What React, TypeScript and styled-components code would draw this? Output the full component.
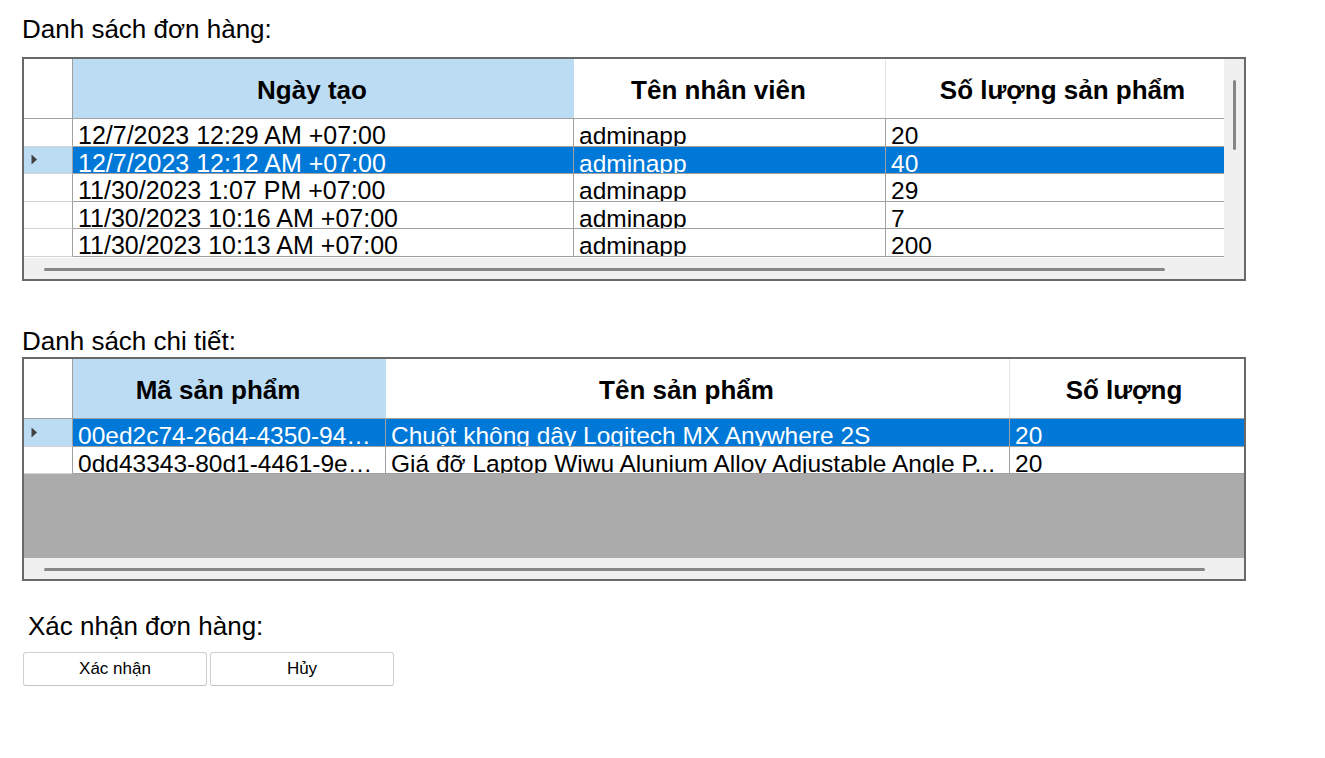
import React from 'react';
import styled, { createGlobalStyle } from 'styled-components';

const GlobalStyle = createGlobalStyle`
  html, body { margin: 0; padding: 0; background: #ffffff; }
  body { font-family: "Liberation Sans", Arial, sans-serif; color: #000; }
  * { box-sizing: border-box; }
`;

const Page = styled.div`
  display: flex;
  flex-direction: column;
  align-items: flex-start;
  width: 1325px;
  height: 758px;
  padding: 14px 0 0 22px;
  overflow: hidden;
`;

const Label = styled.div<{ $top?: number; $indent?: number }>`
  font-size: 26px;
  line-height: 30px;
  height: 30px;
  white-space: nowrap;
  margin-top: ${(p) => p.$top ?? 0}px;
  padding-left: ${(p) => p.$indent ?? 0}px;
`;

const GridFrame = styled.div<{ $top: number }>`
  margin-top: ${(p) => p.$top}px;
  width: 1224px;
  height: 224px;
  border: 2px solid #696969;
  display: flex;
  flex-direction: column;
  background: #ffffff;
`;

const GridBody = styled.div`
  display: flex;
  height: 199px;
`;

const TableArea = styled.div`
  flex: 1;
  min-width: 0;
  overflow: hidden;
  display: flex;
  flex-direction: column;
  background: #ababab;
`;

const HeaderRow = styled.div<{ $cols: string }>`
  display: grid;
  grid-template-columns: ${(p) => p.$cols};
  height: 60px;
  flex: none;
  border-bottom: 1px solid #a0a0a0;
  background: #ffffff;
`;

const CornerCell = styled.div`
  background: #ffffff;
  border-right: 1px solid #a0a0a0;
`;

const HeaderCell = styled.div<{ $active?: boolean }>`
  display: flex;
  align-items: center;
  justify-content: center;
  padding: 3px 22px 0 0;
  font-size: 26px;
  font-weight: bold;
  white-space: nowrap;
  overflow: hidden;
  background: ${(p) => (p.$active ? '#bcdcf4' : '#ffffff')};
  border-right: 1px solid ${(p) => (p.$active ? '#bcdcf4' : '#e4e4e4')};
`;

const RowsArea = styled.div<{ $fill?: boolean }>`
  display: flex;
  flex-direction: column;
  flex: ${(p) => (p.$fill ? '1' : 'none')};
  background: ${(p) => (p.$fill ? '#ffffff' : 'transparent')};
`;

const Row = styled.div<{ $cols: string }>`
  display: grid;
  grid-template-columns: ${(p) => p.$cols};
  height: 27.5px;
  flex: none;
`;

const RowHeaderCell = styled.div<{ $selected?: boolean }>`
  display: flex;
  align-items: center;
  padding-left: 7px;
  background: ${(p) => (p.$selected ? '#bcdcf4' : '#ffffff')};
  border-right: 1px solid #a0a0a0;
  border-bottom: 1px solid #d4d4d4;
`;

const Cell = styled.div<{ $selected?: boolean; $size?: number }>`
  padding: 3px 0 0 5px;
  font-size: ${(p) => p.$size ?? 24.5}px;
  line-height: 27.5px;
  white-space: nowrap;
  overflow: hidden;
  background: ${(p) => (p.$selected ? '#0078d7' : '#ffffff')};
  color: ${(p) => (p.$selected ? '#ffffff' : '#000000')};
  border-right: 1px solid #a0a0a0;
  border-bottom: 1px solid #a0a0a0;
`;

const VScroll = styled.div`
  width: 20px;
  flex: none;
  background: #f0f0f0;
  padding: 21px 0 0 9px;
`;

const VThumb = styled.div`
  width: 3px;
  height: 70px;
  border-radius: 2px;
  background: #868686;
`;

const HScroll = styled.div`
  height: 21px;
  flex: none;
  background: #f0f0f0;
  padding: 10px 0 0 20px;
`;

const HThumb = styled.div<{ $w: number }>`
  width: ${(p) => p.$w}px;
  height: 3px;
  border-radius: 2px;
  background: #868686;
`;

const Buttons = styled.div`
  display: flex;
  gap: 3px;
  margin-top: 11px;
  padding-left: 1px;
`;

const Button = styled.button`
  width: 184px;
  height: 34px;
  background: #ffffff;
  border: 1px solid #d0d0d0;
  border-bottom-color: #c2c2c2;
  border-radius: 3px;
  font-family: "Liberation Sans", Arial, sans-serif;
  font-size: 17px;
  color: #000;
  padding: 0;
`;

const Caret = () => (
  <svg width="7" height="11" viewBox="0 0 7 11">
    <path d="M0.5 0.5 L6 5.5 L0.5 10.5 Z" fill="#404040" />
  </svg>
);

const ordersCols = '49px 501px 312px 376px';
const orders = [
  ['12/7/2023 12:29 AM +07:00', 'adminapp', '20'],
  ['12/7/2023 12:12 AM +07:00', 'adminapp', '40'],
  ['11/30/2023 1:07 PM +07:00', 'adminapp', '29'],
  ['11/30/2023 10:16 AM +07:00', 'adminapp', '7'],
  ['11/30/2023 10:13 AM +07:00', 'adminapp', '200'],
];

const detailCols = '49px 313px 624px 251px';
const details = [
  ['00ed2c74-26d4-4350-94…', 'Chuột không dây Logitech MX Anywhere 2S', '20'],
  ['0dd43343-80d1-4461-9e…', 'Giá đỡ Laptop Wiwu Alunium Alloy Adjustable Angle P...', '20'],
];

export default function App() {
  return (
    <>
      <GlobalStyle />
      <Page>
        <Label>Danh sách đơn hàng:</Label>
        <GridFrame $top={13}>
          <GridBody>
            <TableArea>
              <HeaderRow $cols={ordersCols}>
                <CornerCell />
                <HeaderCell $active>Ngày tạo</HeaderCell>
                <HeaderCell>Tên nhân viên</HeaderCell>
                <HeaderCell>Số lượng sản phẩm</HeaderCell>
              </HeaderRow>
              <RowsArea $fill>
                {orders.map((r, i) => (
                  <Row key={i} $cols={ordersCols}>
                    <RowHeaderCell $selected={i === 1}>{i === 1 && <Caret />}</RowHeaderCell>
                    {r.map((c, j) => (
                      <Cell key={j} $selected={i === 1} $size={j === 0 ? 25 : 24.5}>
                        {c}
                      </Cell>
                    ))}
                  </Row>
                ))}
              </RowsArea>
            </TableArea>
            <VScroll>
              <VThumb />
            </VScroll>
          </GridBody>
          <HScroll>
            <HThumb $w={1121} />
          </HScroll>
        </GridFrame>

        <Label $top={45}>Danh sách chi tiết:</Label>
        <GridFrame $top={1}>
          <GridBody>
            <TableArea>
              <HeaderRow $cols={detailCols}>
                <CornerCell />
                <HeaderCell $active>Mã sản phẩm</HeaderCell>
                <HeaderCell>Tên sản phẩm</HeaderCell>
                <HeaderCell>Số lượng</HeaderCell>
              </HeaderRow>
              <RowsArea>
                {details.map((r, i) => (
                  <Row key={i} $cols={detailCols}>
                    <RowHeaderCell $selected={i === 0}>{i === 0 && <Caret />}</RowHeaderCell>
                    {r.map((c, j) => (
                      <Cell key={j} $selected={i === 0}>
                        {c}
                      </Cell>
                    ))}
                  </Row>
                ))}
              </RowsArea>
            </TableArea>
          </GridBody>
          <HScroll>
            <HThumb $w={1161} />
          </HScroll>
        </GridFrame>

        <Label $top={30} $indent={6}>Xác nhận đơn hàng:</Label>
        <Buttons>
          <Button>Xác nhận</Button>
          <Button>Hủy</Button>
        </Buttons>
      </Page>
    </>
  );
}
